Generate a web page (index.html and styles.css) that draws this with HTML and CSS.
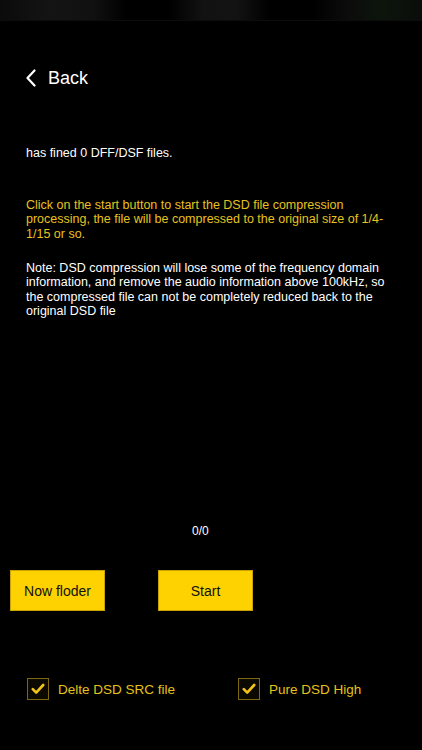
FILE: index.html
```html
<!DOCTYPE html>
<html lang="en">
<head>
  <meta charset="UTF-8">
  <title>DSD Compression</title>
  <link rel="stylesheet" href="styles.css">
</head>
<body>

  <div class="status-bar"></div>

  <div class="nav">
    <a class="back-btn" href="#">
      <svg class="chevron" width="12" height="18" viewBox="0 0 12 18">
        <polyline points="9.5,1.5 2.5,9 9.5,16.5" fill="none" stroke="#fff" stroke-width="2.2" stroke-linecap="round" stroke-linejoin="round"/>
      </svg>
      <span>Back</span>
    </a>
  </div>

  <div class="info">
    <p class="found">has fined 0 DFF/DSF files.</p>
    <p class="hint">Click on the start button to start the DSD file compression processing, the file will be compressed to the original size of 1/4-1/15 or so.</p>
    <p class="note">Note: DSD compression will lose some of the frequency domain information, and remove the audio information above 100kHz, so the compressed file can not be completely reduced back to the original DSD file</p>
  </div>

  <div class="progress">0/0</div>

  <div class="buttons">
    <button class="btn">Now floder</button>
    <button class="btn">Start</button>
  </div>

  <div class="options">
    <label class="option">
      <span class="check-box">
        <svg width="14" height="12" viewBox="0 0 14 12">
          <polyline points="1.8,6.2 5.2,9.6 12.2,2" fill="none" stroke="#f2c417" stroke-width="2.6" stroke-linecap="round" stroke-linejoin="round"/>
        </svg>
      </span>
      <span>Delte DSD SRC file</span>
    </label>
    <label class="option">
      <span class="check-box">
        <svg width="14" height="12" viewBox="0 0 14 12">
          <polyline points="1.8,6.2 5.2,9.6 12.2,2" fill="none" stroke="#f2c417" stroke-width="2.6" stroke-linecap="round" stroke-linejoin="round"/>
        </svg>
      </span>
      <span>Pure DSD High</span>
    </label>
  </div>

</body>
</html>
```

FILE: styles.css
```css
body {
  margin: 0;
  background-color: #000;
  font-family: "Liberation Sans", Arial, sans-serif;
  color: #fff;
  width: 422px;
  height: 750px;
  overflow: hidden;
}

.status-bar {
  height: 20px;
  background: linear-gradient(to right, #0b0b0b 0%, #141414 12%, #111 22%, #000 30%, #000 40%, #121212 48%, #131313 56%, #000 64%, #000 74%, #0b0b0b 82%, #0c150c 90%, #0a0d0a 100%);
  border-bottom: 1px solid #0c0c0c;
}

.nav {
  height: 40px;
  margin-top: 37px;
  display: flex;
  align-items: center;
  padding-left: 25px;
}

.back-btn {
  display: flex;
  align-items: center;
  color: #fff;
  text-decoration: none;
  font-size: 18px;
}

.chevron {
  margin-right: 11px;
}

.info {
  width: 370px;
  padding: 0 26px;
  margin-top: 48px;
}

.info p {
  margin: 0;
  font-size: 12.5px;
  line-height: 14.5px;
}

.hint {
  color: #e8c21e;
  margin-top: 37px !important;
}

.note {
  margin-top: 19.5px !important;
}

.progress {
  margin-top: 205px;
  font-size: 12px;
  line-height: 14.5px;
  padding-left: 192px;
}

.buttons {
  display: flex;
  gap: 53px;
  padding-left: 10px;
  margin-top: 32px;
}

.btn {
  width: 95px;
  height: 41px;
  border: 1px solid #c9a400;
  background-color: #fdd200;
  color: #111;
  font-family: "Liberation Sans", Arial, sans-serif;
  font-size: 14px;
  padding: 0;
}

.options {
  display: flex;
  padding-left: 27px;
  margin-top: 67px;
}

.option {
  display: flex;
  align-items: center;
  color: #e6c21c;
  font-size: 13.5px;
}

.option:first-child {
  width: 211px;
  flex-shrink: 0;
}

.check-box {
  width: 20px;
  height: 20px;
  border: 1px solid #7d6812;
  background-color: #0b0900;
  display: flex;
  align-items: center;
  justify-content: center;
  margin-right: 9px;
}
```
